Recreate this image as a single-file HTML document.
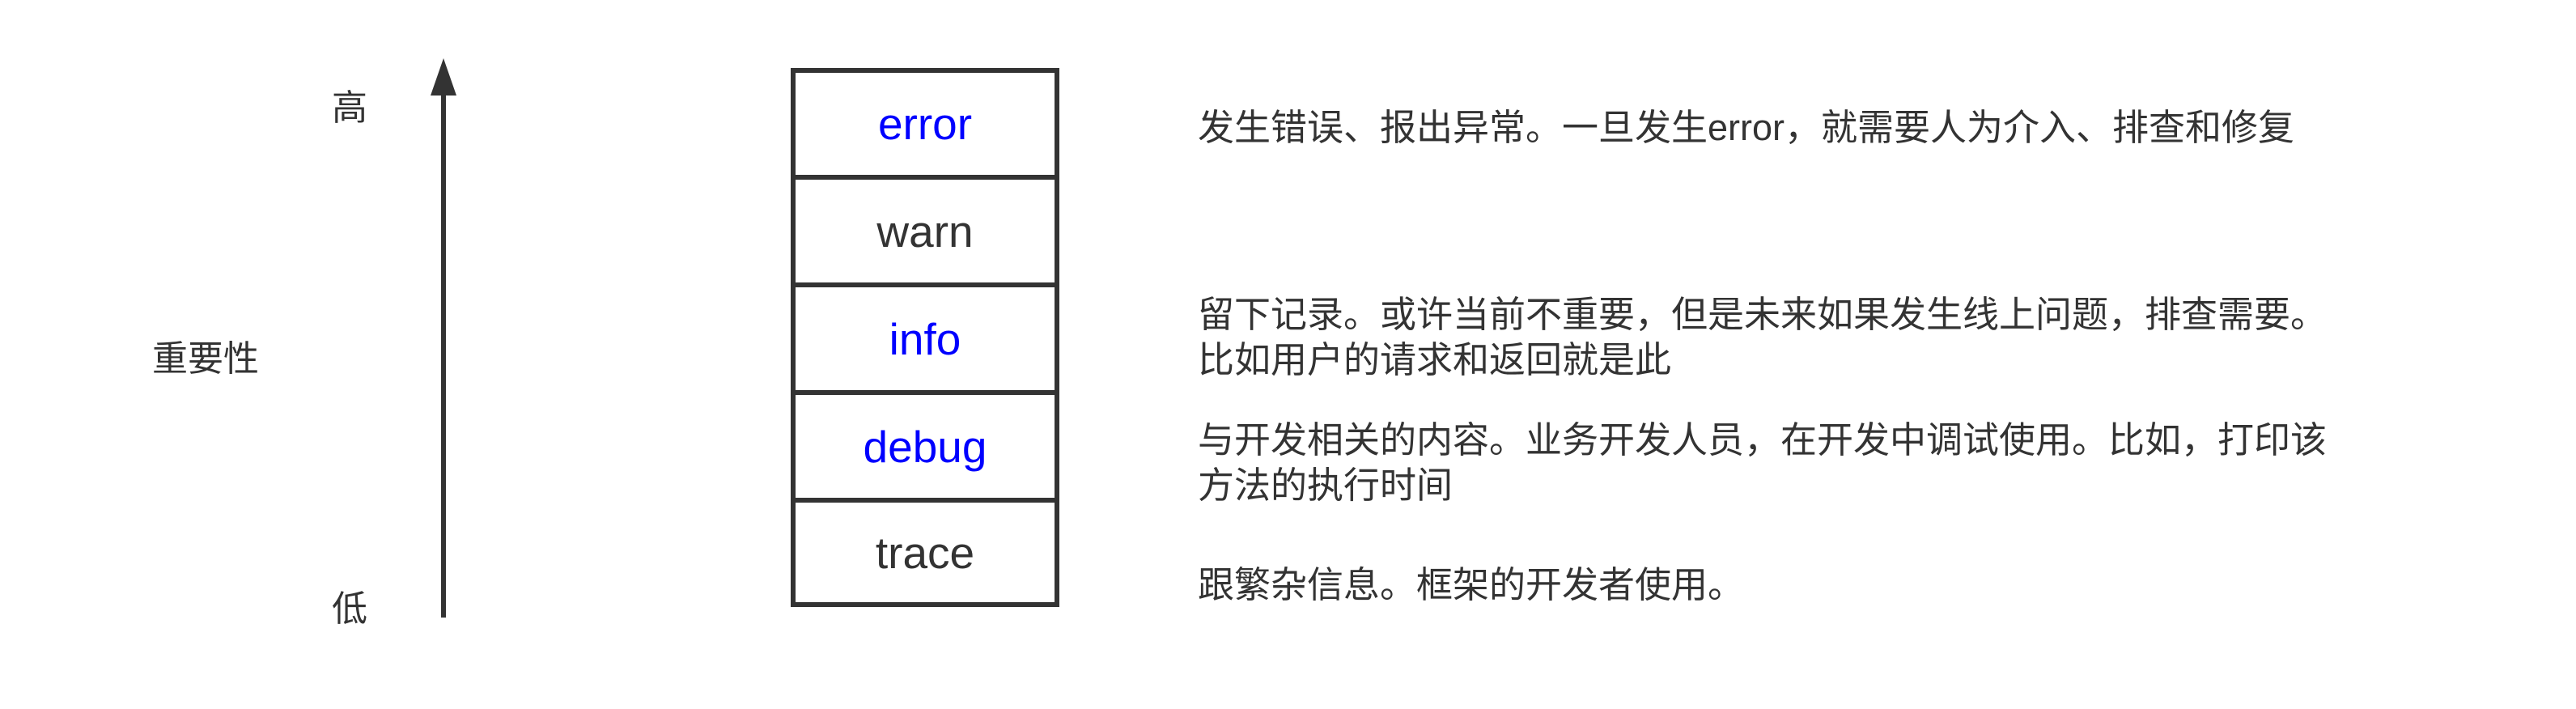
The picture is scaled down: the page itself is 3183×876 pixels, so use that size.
<!DOCTYPE html>
<html><head><meta charset="utf-8"><style>
body{margin:0;width:3183px;height:876px;background:#fff;position:relative;overflow:hidden;font-family:"Liberation Sans","Noto Sans CJK SC",sans-serif;color:#333}
.t{position:absolute;font-size:45px;line-height:56px;white-space:nowrap}
.box{position:absolute;left:977px;width:332px;background:#333}
.cell{position:absolute;left:6px;width:320px;background:#fff;text-align:center;font-size:55px;display:flex;align-items:center;justify-content:center}
.b{color:#0000ff}
</style></head><body>
<svg style="position:absolute;left:0;top:0" width="3183" height="876">
<line x1="548" y1="110" x2="548" y2="763" stroke="#333" stroke-width="6"/>
<polygon points="548,72 532,118 564,118" fill="#333"/>
</svg>
<div class="t" style="left:410px;top:106px;font-size:44px">高</div>
<div class="t" style="left:410px;top:725px;font-size:44px">低</div>
<div class="t" style="left:188px;top:416px;font-size:44px">重要性</div>
<div class="box" style="top:84px;height:666px">
<div class="cell b" style="top:6px;height:126px">error</div>
<div class="cell" style="top:138px;height:127px">warn</div>
<div class="cell b" style="top:271px;height:127px">info</div>
<div class="cell b" style="top:404px;height:127px">debug</div>
<div class="cell" style="top:537px;height:123px">trace</div>
</div>
<div class="t" style="left:1480px;top:130px">发生错误、报出异常。一旦发生error，就需要人为介入、排查和修复</div>
<div class="t" style="left:1480px;top:361px">留下记录。或许当前不重要，但是未来如果发生线上问题，排查需要。<br>比如用户的请求和返回就是此</div>
<div class="t" style="left:1480px;top:516px">与开发相关的内容。业务开发人员，在开发中调试使用。比如，打印该<br>方法的执行时间</div>
<div class="t" style="left:1480px;top:695px">跟繁杂信息。框架的开发者使用。</div>
</body></html>
